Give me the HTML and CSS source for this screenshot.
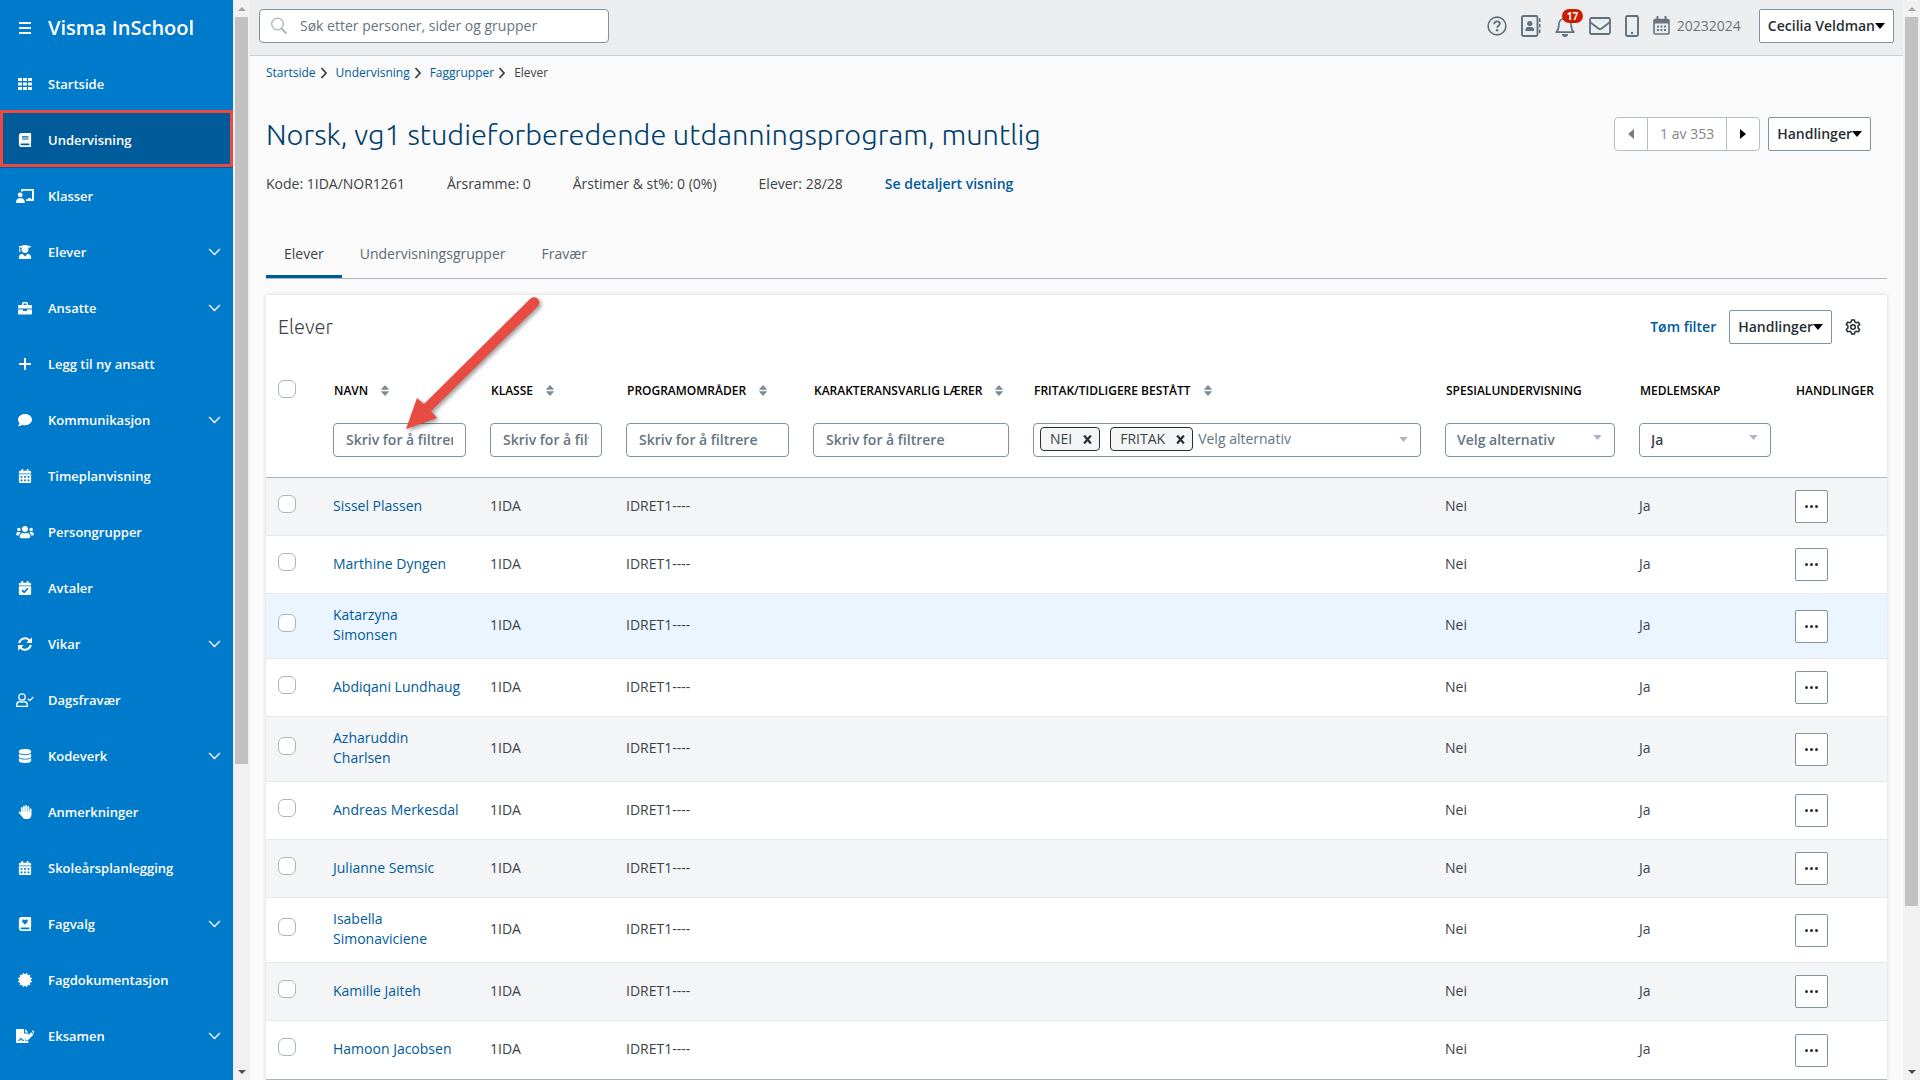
FILE: index.html
```html
<!DOCTYPE html>
<html lang="no">
<head>
  <meta charset="UTF-8">
  <title>Visma InSchool</title>
  <link rel="stylesheet" href="styles.css">
</head>
<body>
  <!-- Icons -->
  <svg class="sprite" aria-hidden="true">
    <symbol id="i-grid" viewBox="0 0 14 14"><path d="M0 1h4v3H0zM5 1h4v3H5zM10 1h4v3h-4zM0 5.500h4v3H0zM5 5.500h4v3H5zM10 5.500h4v3h-4zM0 10h4v3H0zM5 10h4v3H5zM10 10h4v3h-4z"/></symbol>
    <symbol id="i-book" viewBox="0 0 448 512"><path d="M448 360V24c0-13.300-10.700-24-24-24H96C43 0 0 43 0 96v320c0 53 43 96 96 96h328c13.300 0 24-10.700 24-24v-16c0-7.500-3.500-14.300-8.900-18.700-4.200-15.400-4.200-59.300 0-74.700 5.400-4.300 8.900-11.100 8.900-18.600zM112 118h240v50H112zm0 80h240v40H112zm269 250H96c-17.700 0-32-14.300-32-32 0-17.600 14.400-32 32-32h285c-1.900 17-1.900 47 0 64z"/></symbol>
    <symbol id="i-board" viewBox="0 0 18 14"><path d="M6 0h11a1 1 0 0 1 1 1v10a1 1 0 0 1-1 1h-7v-1.700h2V9h3v1.300h1V1.800H7v1A4 4 0 0 0 5 2.300V1a1 1 0 0 1 1-1z"/><circle cx="4.200" cy="5.800" r="2.400"/><path d="M0 14c0-3 1.300-4.700 3.500-4.700h1.800c2.200 0 3.500 1.700 3.500 4.700z"/></symbol>
    <symbol id="i-student" viewBox="0 0 448 512"><path d="M319.400 320.600L224 416l-95.400-95.400C57.100 323.700 0 382.200 0 454.400v9.600c0 26.500 21.500 48 48 48h352c26.500 0 48-21.500 48-48v-9.600c0-72.200-57.100-130.700-128.600-133.800zM13.600 79.800l6.400 1.500v58.400c-7 4.200-12 11.500-12 20.300 0 8.400 4.600 15.400 11.100 19.700L3.500 242c-1.700 6.900 2.100 14 7.600 14h41.800c5.500 0 9.300-7.100 7.600-14l-15.600-62.300C51.400 175.400 56 168.400 56 160c0-8.800-5-16.100-12-20.300V87.100l66 15.900c-8.600 17.200-14 36.400-14 57 0 70.700 57.300 128 128 128s128-57.300 128-128c0-20.600-5.300-39.800-14-57l96.300-23.200c18.200-4.400 18.200-27.100 0-31.500l-190.400-46c-13-3.100-26.700-3.100-39.700 0L13.600 48.200c-18.100 4.400-18.100 27.200 0 31.600z"/></symbol>
    <symbol id="i-case" viewBox="0 0 14 14"><path d="M0 8.500h5V10h4V8.500h5v4a1 1 0 0 1-1 1H1a1 1 0 0 1-1-1zM4 4V2.500A1.500 1.500 0 0 1 5.500 1h3A1.500 1.500 0 0 1 10 2.500V4h3a1 1 0 0 1 1 1v2.500H0V5a1 1 0 0 1 1-1zM5.500 4h3V2.500h-3z"/></symbol>
    <symbol id="i-plus" viewBox="0 0 14 14"><path d="M6 1h2v5h5v2H8v5H6V8H1V6h5z"/></symbol>
    <symbol id="i-comment" viewBox="0 0 512 512"><path d="M256 32C114.600 32 0 125.100 0 240c0 49.600 21.400 95 57 130.700C44.500 421.100 2.700 466 2.200 466.500c-2.200 2.300-2.800 5.700-1.500 8.700S4.800 480 8 480c66.300 0 116-31.800 140.600-51.400 32.700 12.300 69 19.400 107.400 19.400 141.400 0 256-93.100 256-208S397.400 32 256 32z"/></symbol>
    <symbol id="i-cal" viewBox="0 0 448 512"><path fill-rule="evenodd" d="M0 464c0 26.500 21.500 48 48 48h352c26.500 0 48-21.500 48-48V192H0zM400 64h-48V16c0-9-7-16-16-16h-32c-9 0-16 7-16 16v48H160V16c0-9-7-16-16-16h-32c-9 0-16 7-16 16v48H48C21.500 64 0 85.500 0 112v48h448v-48c0-26.500-21.500-48-48-48zM64 256v64h64v-64zm128 0v64h64v-64zm128 0v64h64v-64zM64 384v64h64v-64zm128 0v64h64v-64zm128 0v64h64v-64z"/></symbol>
    <symbol id="i-users" viewBox="0 0 640 512"><path d="M96 224c35.300 0 64-28.700 64-64s-28.700-64-64-64-64 28.700-64 64 28.700 64 64 64zm448 0c35.300 0 64-28.700 64-64s-28.700-64-64-64-64 28.700-64 64 28.700 64 64 64zm32 32h-64c-17.600 0-33.500 7.100-45.100 18.600 40.300 22.100 68.900 62 75.100 109.400h66c17.700 0 32-14.300 32-32v-32c0-35.300-28.700-64-64-64zm-256 0c61.900 0 112-50.100 112-112S381.900 32 320 32 208 82.100 208 144s50.100 112 112 112zm76.800 32h-8.300c-20.800 10-43.900 16-68.500 16s-47.600-6-68.500-16h-8.300C179.600 288 128 339.600 128 403.200V432c0 26.500 21.500 48 48 48h288c26.500 0 48-21.500 48-48v-28.800c0-63.600-51.600-115.200-115.200-115.200zm-223.700-13.400C161.500 263.100 145.600 256 128 256H64c-35.300 0-64 28.700-64 64v32c0 17.700 14.300 32 32 32h65.900c6.300-47.400 34.900-87.300 75.200-109.400z"/></symbol>
    <symbol id="i-calcheck" viewBox="0 0 448 512"><path d="M436 160H12c-6.600 0-12-5.400-12-12v-36c0-26.500 21.500-48 48-48h48V12c0-6.600 5.400-12 12-12h40c6.600 0 12 5.400 12 12v52h128V12c0-6.600 5.400-12 12-12h40c6.600 0 12 5.400 12 12v52h48c26.500 0 48 21.500 48 48v36c0 6.600-5.400 12-12 12zM12 192h424c6.600 0 12 5.400 12 12v260c0 26.500-21.500 48-48 48H48c-26.500 0-48-21.500-48-48V204c0-6.600 5.400-12 12-12zm333.300 96l-28.200-28.400c-4.600-4.800-12.200-4.800-17-.1L194.100 364.700l-46-46.400c-4.600-4.700-12.200-4.700-16.900-.1l-28.400 28.200c-4.700 4.700-4.700 12.300-.1 17l82.600 83.200c4.700 4.700 12.300 4.700 17 .1l143-141.800c4.600-4.700 4.600-12.300 0-17z"/></symbol>
    <symbol id="i-sync" viewBox="0 0 14 14"><path fill="none" stroke="currentColor" stroke-width="2" d="M1.200 6.200A5.900 5.900 0 0 1 11.600 3.500M12.800 7.800A5.900 5.900 0 0 1 2.400 10.500"/><path d="M14 .3V6H8.300zM0 13.700V8h5.700z"/></symbol>
    <symbol id="i-usercheck" viewBox="0 0 18 14"><g fill="none" stroke="currentColor" stroke-width="1.300"><circle cx="6" cy="4" r="3.200"/><path d="M3.500 8.500C1.500 8.800.7 10.300.7 12v1.300h10.600V12c0-1.700-.8-3.200-2.800-3.500-1.500.6-3.500.6-5 0zM11.800 5.800l1.900 1.900L17.400 4"/></g></symbol>
    <symbol id="i-db" viewBox="0 0 448 512"><path d="M448 73v46c0 40-100 73-224 73S0 159 0 119V73C0 33 100 0 224 0s224 33 224 73zM448 176v103c0 40-100 73-224 73S0 319 0 279V176c48 33 136 48.600 224 48.600S400 209 448 176zm0 160v103c0 40-100 73-224 73S0 479 0 439V336c48 33 136 48.600 224 48.600S400 369 448 336z"/></symbol>
    <symbol id="i-hand" viewBox="0 0 14 14"><path d="M2.900 7.700V3a.9.9 0 0 1 1.800 0v3.500h.4V1.400a.9.900 0 0 1 1.800 0v5h.4V.9a.9.900 0 0 1 1.800 0v5.500h.4V2a.9.900 0 0 1 1.800 0v4.800h.4V4.300a.9.900 0 0 1 1.800 0v5c0 3-1.500 4.700-4 4.700H7.800c-1.500 0-2.300-.6-3-1.600L.9 7.900a.9.900 0 0 1 1.300-1.200z"/></symbol>
    <symbol id="i-bookheart" viewBox="0 0 448 512"><path d="M448 358V24c0-13-11-24-24-24H96C43 0 0 43 0 96v320c0 53 43 96 96 96h328c13 0 24-11 24-24v-16c0-8-3-14-9-19-4-15-4-59 0-74 6-5 9-12 9-21zM143 103c24-21 59-15 81 8 22-23 57-29 81-8 28 25 27 65 3 90l-76 79c-5 5-11 5-16 0l-76-79c-24-25-25-65 3-90zm238 345H96c-18 0-32-14-32-32s14-32 32-32h285z"/></symbol>
    <symbol id="i-cert" viewBox="0 0 512 512"><path d="M458.600 256l46-45c13.700-13 7.300-36-10.700-40.400l-62.600-16 17.600-62c5-17.800-11.800-34.600-29.600-29.600l-62 17.600-16-62.600C337.100.2 313.800-6.300 301 7.200l-45 46.400-45-46.400c-12.600-13.300-36-7.200-40.300 10.700l-16 62.700-62-17.700C74.900 57.900 58 74.700 63 92.600l17.700 62-62.600 16C0 174.900-6.300 198 7.400 211l46 45-46 45c-13.700 13-7.300 36 10.700 40.300l62.600 16-17.600 62c-5 17.800 11.800 34.700 29.600 29.700l62-17.700 16 62.700c4.400 18.600 27.700 24 40.300 10.600l45-46 45 46c12.500 13.500 36 7.500 40.300-10.600l16-62.700 62 17.700c17.800 5 34.600-11.900 29.600-29.700l-17.600-62 62.600-16c18-4.300 24.400-27.400 10.700-40.300z"/></symbol>
    <symbol id="i-filepen" viewBox="0 1 18 14"><path fill-rule="evenodd" d="M1 1h7v4.500h4.500v2L9 11v2h3.500v1a1 1 0 0 1-1 1H1a1 1 0 0 1-1-1V2a1 1 0 0 1 1-1zm8 0l3.500 3.500H9zM2 12.800h1.500c.6 0 .8-1 1.300-1.500l1 1.500H8v-1H6.600L5 9.700c-.8.300-1.300 1.300-1.800 2.100H2z"/><path d="M15.300 4.200l2.300 2.300-6 6H9.400v-2.300zM16 3.500l.6-.6c.4-.4.800-.4 1.100-.1l.3.300v2.700z"/></symbol>
    <symbol id="i-down" viewBox="0 0 12 8"><path fill="none" stroke="currentColor" stroke-width="1.300" d="M.6 1L6 6.500 11.400 1"/></symbol>
    <symbol id="i-right" viewBox="0 0 8 12"><path fill="none" stroke="currentColor" stroke-width="1.800" d="M1.500 1L6 6l-4.500 5"/></symbol>
    <symbol id="i-sort" viewBox="0 0 8 11"><path d="M4 0l3.800 4.200v.6H.2v-.6zM4 11L.2 6.800v-.6h7.600v.6z"/></symbol>
    <symbol id="i-caret" viewBox="0 0 10 6"><path d="M0 0h10L5 6z"/></symbol>
  </svg>

  <nav class="sidebar">
    <div class="brand">
      <button class="burger" aria-label="Meny"><span></span><span></span><span></span></button>
      <span>Visma InSchool</span>
    </div>
    <a href="#"><svg><use href="#i-grid"/></svg>Startside</a>
    <a href="#" class="active"><svg><use href="#i-book"/></svg>Undervisning</a>
    <a href="#"><svg><use href="#i-board"/></svg>Klasser</a>
    <a href="#"><svg><use href="#i-student"/></svg>Elever<svg class="chev"><use href="#i-down"/></svg></a>
    <a href="#"><svg><use href="#i-case"/></svg>Ansatte<svg class="chev"><use href="#i-down"/></svg></a>
    <a href="#"><svg><use href="#i-plus"/></svg>Legg til ny ansatt</a>
    <a href="#"><svg><use href="#i-comment"/></svg>Kommunikasjon<svg class="chev"><use href="#i-down"/></svg></a>
    <a href="#"><svg><use href="#i-cal"/></svg>Timeplanvisning</a>
    <a href="#"><svg><use href="#i-users"/></svg>Persongrupper</a>
    <a href="#"><svg><use href="#i-calcheck"/></svg>Avtaler</a>
    <a href="#"><svg><use href="#i-sync"/></svg>Vikar<svg class="chev"><use href="#i-down"/></svg></a>
    <a href="#"><svg><use href="#i-usercheck"/></svg>Dagsfravær</a>
    <a href="#"><svg><use href="#i-db"/></svg>Kodeverk<svg class="chev"><use href="#i-down"/></svg></a>
    <a href="#"><svg><use href="#i-hand"/></svg>Anmerkninger</a>
    <a href="#"><svg><use href="#i-cal"/></svg>Skoleårsplanlegging</a>
    <a href="#"><svg><use href="#i-bookheart"/></svg>Fagvalg<svg class="chev"><use href="#i-down"/></svg></a>
    <a href="#"><svg><use href="#i-cert"/></svg>Fagdokumentasjon</a>
    <a href="#"><svg><use href="#i-filepen"/></svg>Eksamen<svg class="chev"><use href="#i-down"/></svg></a>
  </nav>

  <div class="scrollbar side" aria-hidden="true"><i class="up"></i><div class="track"><b></b></div><i class="down"></i></div>

  <div class="page">
    <header class="topbar">
      <label class="search">
        <svg viewBox="0 0 16 18"><g fill="none" stroke="currentColor"><circle cx="6.500" cy="7" r="5.800" stroke-width="1.300"/><path d="M10.500 11.500l5 5" stroke-width="1.800"/></g></svg>
        <input type="text" placeholder="Søk etter personer, sider og grupper" aria-label="Søk">
      </label>
      <div class="tools">
        <button class="tool" aria-label="Hjelp"><svg viewBox="0 0 20 20" width="20" height="20"><g fill="none" stroke="currentColor"><circle cx="10" cy="10" r="8.900" stroke-width="1.600"/><path d="M7.200 8.200c0-1.800 1.200-2.800 2.800-2.800s2.800 1 2.800 2.400c0 1.900-2.700 1.900-2.700 4" stroke-width="1.900"/></g><circle cx="10.100" cy="14.200" r="1.200" fill="currentColor"/></svg></button>
        <button class="tool" aria-label="Kontakter"><svg viewBox="0 0 20 22" width="20" height="22"><rect x="1" y="1" width="15.500" height="20" rx="1.500" fill="none" stroke="currentColor" stroke-width="1.900"/><path fill="currentColor" d="M18 3.500h1.500V7H18zM18 9h1.500v3.500H18zM18 14.500h1.500V18H18zM4.500 16v-1.500c0-1.600 1-2.500 2.500-2.500h3.500c1.500 0 2.500.9 2.500 2.500V16z"/><circle cx="8.800" cy="8.500" r="2.600" fill="currentColor"/></svg></button>
        <button class="tool bell" aria-label="Varsler"><svg viewBox="0 0 20 22" width="20" height="22"><path fill="none" stroke="currentColor" stroke-width="1.700" stroke-linejoin="round" d="M1.200 17.200c1.800-1.700 2.600-3.200 2.600-7.200 0-4 2.500-6.500 6.200-6.500s6.200 2.500 6.200 6.500c0 4 .8 5.500 2.600 7.200z"/><path fill="currentColor" d="M9 1h2v2H9zM7 19h6a3 3 0 0 1-6 0z"/></svg><span class="badge">17</span></button>
        <button class="tool" aria-label="Meldinger"><svg viewBox="0 0 22 18" width="22" height="18"><g fill="none" stroke="currentColor" stroke-width="1.800"><rect x="1" y="1" width="20" height="16" rx="1.500"/><path d="M1 5l8 6.200c1.300 1 2.700 1 4 0L21 5"/></g></svg></button>
        <button class="tool" aria-label="Mobil"><svg viewBox="0 0 14 22" width="14" height="22"><rect x="1" y="1" width="12" height="20" rx="1.500" fill="none" stroke="currentColor" stroke-width="1.900"/><circle cx="7" cy="18" r="1.200" fill="currentColor"/></svg></button>
        <a href="#" class="year"><svg viewBox="0 0 17 19" width="17" height="19"><rect x="1" y="3.500" width="15" height="14.500" rx="1.200" fill="none" stroke="currentColor" stroke-width="1.600"/><path fill="currentColor" d="M3.500 0h2v4h-2zM11.500 0h2v4h-2zM1 3.500h15v4H1zM4 9.500h2v2H4zM7.500 9.500h2v2h-2zM11 9.500h2v2h-2zM4 13h2v2H4zM7.500 13h2v2h-2zM11 13h2v2h-2z"/></svg>20232024</a>
        <button class="btn user">Cecilia Veldman<svg class="caret"><use href="#i-caret"/></svg></button>
      </div>
    </header>

    <main>
      <div class="breadcrumb">
        <a href="#">Startside</a><svg><use href="#i-right"/></svg>
        <a href="#">Undervisning</a><svg><use href="#i-right"/></svg>
        <a href="#">Faggrupper</a><svg><use href="#i-right"/></svg>
        <span>Elever</span>
      </div>

      <div class="title-row">
        <h1>Norsk, vg1 studieforberedende utdanningsprogram, muntlig</h1>
        <div class="pager">
          <button disabled aria-label="Forrige"><svg viewBox="0 0 6 10"><path d="M6 0v10L0 5z"/></svg></button>
          <span>1 av 353</span>
          <button aria-label="Neste"><svg viewBox="0 0 6 10"><path d="M0 0v10l6-5z"/></svg></button>
        </div>
        <button class="btn">Handlinger<svg class="caret"><use href="#i-caret"/></svg></button>
      </div>

      <div class="meta">
        <span>Kode: 1IDA/NOR1261</span>
        <span>Årsramme: 0</span>
        <span>Årstimer &amp; st%: 0 (0%)</span>
        <span>Elever: 28/28</span>
        <a href="#">Se detaljert visning</a>
      </div>

      <div class="tabs">
        <a href="#" class="current">Elever</a>
        <a href="#">Undervisningsgrupper</a>
        <a href="#">Fravær</a>
      </div>

      <section class="card">
        <div class="card-head">
          <h2>Elever</h2>
          <a href="#">Tøm filter</a>
          <button class="btn">Handlinger<svg class="caret"><use href="#i-caret"/></svg></button>
          <button class="gear" aria-label="Innstillinger"><svg viewBox="0 0 16 16" width="16" height="16"><g fill="none" stroke="currentColor" stroke-width="1.500" stroke-linejoin="round"><path d="M6.600.9h2.800l.4 2 1.500.9 2-.7 1.400 2.400-1.600 1.400v2.200l1.600 1.400-1.400 2.400-2-.7-1.500.9-.4 2H6.600l-.4-2-1.500-.9-2 .7-1.400-2.400 1.600-1.400V6.900L1.300 5.500l1.400-2.400 2 .7 1.500-.9z"/><circle cx="8" cy="8" r="2.300"/></g></svg></button>
        </div>

        <table>
          <colgroup>
            <col class="c-check"><col class="c-name"><col class="c-class"><col class="c-prog"><col class="c-teacher"><col><col class="c-spec"><col class="c-member"><col class="c-act">
          </colgroup>
          <thead>
            <tr class="labels">
              <th><input type="checkbox" aria-label="Velg alle"></th>
              <th>NAVN<svg class="sort"><use href="#i-sort"/></svg></th>
              <th>KLASSE<svg class="sort"><use href="#i-sort"/></svg></th>
              <th>PROGRAMOMRÅDER<svg class="sort"><use href="#i-sort"/></svg></th>
              <th>KARAKTERANSVARLIG LÆRER<svg class="sort"><use href="#i-sort"/></svg></th>
              <th>FRITAK/TIDLIGERE BESTÅTT<svg class="sort"><use href="#i-sort"/></svg></th>
              <th>SPESIALUNDERVISNING</th>
              <th>MEDLEMSKAP</th>
              <th>HANDLINGER</th>
            </tr>
            <tr class="filters">
              <td></td>
              <td><input class="field" type="text" placeholder="Skriv for å filtrere" aria-label="Navn"></td>
              <td><input class="field" type="text" placeholder="Skriv for å filtrere" aria-label="Klasse"></td>
              <td><input class="field" type="text" placeholder="Skriv for å filtrere" aria-label="Programområder"></td>
              <td><input class="field" type="text" placeholder="Skriv for å filtrere" aria-label="Karakteransvarlig lærer"></td>
              <td>
                <div class="field multi">
                  <span class="tag">NEI <button aria-label="Fjern Nei"><svg viewBox="0 0 8 8"><path d="M1 .5l6 7M7 .5l-6 7"/></svg></button></span>
                  <span class="tag">FRITAK <button aria-label="Fjern Fritak"><svg viewBox="0 0 8 8"><path d="M1 .5l6 7M7 .5l-6 7"/></svg></button></span>
                  <input type="text" placeholder="Velg alternativ" aria-label="Fritak/tidligere bestått">
                  <svg class="arrow"><use href="#i-caret"/></svg>
                </div>
              </td>
              <td>
                <div class="pick">
                  <select class="field empty" aria-label="Spesialundervisning"><option>Velg alternativ</option></select>
                  <svg class="arrow"><use href="#i-caret"/></svg>
                </div>
              </td>
              <td>
                <div class="pick">
                  <select class="field" aria-label="Medlemskap"><option>Ja</option></select>
                  <svg class="arrow"><use href="#i-caret"/></svg>
                </div>
              </td>
              <td></td>
            </tr>
          </thead>
          <tbody>
            <tr>
              <td><input type="checkbox" aria-label="Sissel Plassen"></td>
              <td><a href="#">Sissel Plassen</a></td><td>1IDA</td><td>IDRET1----</td><td></td><td></td><td>Nei</td><td>Ja</td>
              <td><button class="more" aria-label="Handlinger"><i></i><i></i><i></i></button></td>
            </tr>
            <tr>
              <td><input type="checkbox" aria-label="Marthine Dyngen"></td>
              <td><a href="#">Marthine Dyngen</a></td><td>1IDA</td><td>IDRET1----</td><td></td><td></td><td>Nei</td><td>Ja</td>
              <td><button class="more" aria-label="Handlinger"><i></i><i></i><i></i></button></td>
            </tr>
            <tr class="hover">
              <td><input type="checkbox" aria-label="Katarzyna Simonsen"></td>
              <td><a href="#">Katarzyna Simonsen</a></td><td>1IDA</td><td>IDRET1----</td><td></td><td></td><td>Nei</td><td>Ja</td>
              <td><button class="more" aria-label="Handlinger"><i></i><i></i><i></i></button></td>
            </tr>
            <tr>
              <td><input type="checkbox" aria-label="Abdiqani Lundhaug"></td>
              <td><a href="#">Abdiqani Lundhaug</a></td><td>1IDA</td><td>IDRET1----</td><td></td><td></td><td>Nei</td><td>Ja</td>
              <td><button class="more" aria-label="Handlinger"><i></i><i></i><i></i></button></td>
            </tr>
            <tr>
              <td><input type="checkbox" aria-label="Azharuddin Charlsen"></td>
              <td><a href="#">Azharuddin Charlsen</a></td><td>1IDA</td><td>IDRET1----</td><td></td><td></td><td>Nei</td><td>Ja</td>
              <td><button class="more" aria-label="Handlinger"><i></i><i></i><i></i></button></td>
            </tr>
            <tr>
              <td><input type="checkbox" aria-label="Andreas Merkesdal"></td>
              <td><a href="#">Andreas Merkesdal</a></td><td>1IDA</td><td>IDRET1----</td><td></td><td></td><td>Nei</td><td>Ja</td>
              <td><button class="more" aria-label="Handlinger"><i></i><i></i><i></i></button></td>
            </tr>
            <tr>
              <td><input type="checkbox" aria-label="Julianne Semsic"></td>
              <td><a href="#">Julianne Semsic</a></td><td>1IDA</td><td>IDRET1----</td><td></td><td></td><td>Nei</td><td>Ja</td>
              <td><button class="more" aria-label="Handlinger"><i></i><i></i><i></i></button></td>
            </tr>
            <tr>
              <td><input type="checkbox" aria-label="Isabella Simonaviciene"></td>
              <td><a href="#">Isabella Simonaviciene</a></td><td>1IDA</td><td>IDRET1----</td><td></td><td></td><td>Nei</td><td>Ja</td>
              <td><button class="more" aria-label="Handlinger"><i></i><i></i><i></i></button></td>
            </tr>
            <tr>
              <td><input type="checkbox" aria-label="Kamille Jaiteh"></td>
              <td><a href="#">Kamille Jaiteh</a></td><td>1IDA</td><td>IDRET1----</td><td></td><td></td><td>Nei</td><td>Ja</td>
              <td><button class="more" aria-label="Handlinger"><i></i><i></i><i></i></button></td>
            </tr>
            <tr>
              <td><input type="checkbox" aria-label="Hamoon Jacobsen"></td>
              <td><a href="#">Hamoon Jacobsen</a></td><td>1IDA</td><td>IDRET1----</td><td></td><td></td><td>Nei</td><td>Ja</td>
              <td><button class="more" aria-label="Handlinger"><i></i><i></i><i></i></button></td>
            </tr>
          </tbody>
        </table>

        <!-- Arrow pointing at the name filter -->
        <svg class="pointer" viewBox="0 0 140 140" aria-hidden="true"><path fill="#e84b42" d="M4 134L15 103l7 6L128 4a5.200 5.200 0 0 1 8 7L29 116l6 7z"/></svg>
      </section>
    </main>
  </div>

  <div class="scrollbar main" aria-hidden="true"><i class="up"></i><div class="track"><b></b></div><i class="down"></i></div>
</body>
</html>
```
FILE: styles.css
```css
* {
  box-sizing: border-box;
}

body {
  margin: 0;
  height: 100vh;
  overflow: hidden;
  display: grid;
  grid-template-columns: 233px 17px 1fr 17px;
  font-family: "Open Sans", sans-serif;
  font-size: 14px;
  line-height: 20px;
  color: #3c4348;
  background: #fafafa;
}

a {
  color: #005b9a;
  text-decoration: none;
}

button, input, select {
  font: inherit;
  color: inherit;
}

button {
  padding: 0;
  border: none;
  background: none;
  cursor: pointer;
}

.sprite {
  position: absolute;
  width: 0;
  height: 0;
}

/* Sidebar */
.sidebar {
  height: 100vh;
  overflow: hidden;
  background: #007aca;
  color: #fff;
}

.brand {
  display: flex;
  align-items: center;
  gap: 17px;
  height: 56px;
  padding-left: 19px;
  font-size: 20px;
  font-weight: 600;
}

.burger {
  display: flex;
  flex-direction: column;
  gap: 3px;
  width: 12px;
}

.burger span {
  height: 2px;
  background: #fff;
}

.sidebar a {
  position: relative;
  display: flex;
  align-items: center;
  height: 56px;
  padding: 0 12px 0 16px;
  color: #fff;
  font-size: 13px;
  font-weight: 600;
}

.sidebar svg {
  width: 18px;
  height: 14px;
  margin-right: 14px;
  fill: currentColor;
}

.sidebar .chev {
  width: 13px;
  height: 8px;
  margin: 0 0 0 auto;
}

.sidebar .active {
  background: #005b9a;
}

.sidebar .active::after {
  content: "";
  position: absolute;
  inset: -2px 0 1px;
  border: 3px solid #ea4a42;
}

/* Scrollbars */
.scrollbar {
  display: flex;
  flex-direction: column;
  align-items: center;
  height: 100vh;
  background: #f1f1f1;
}

.scrollbar i {
  display: flex;
  align-items: center;
  justify-content: center;
  height: 17px;
}

.scrollbar i::before {
  content: "";
  border: 4px solid transparent;
}

.scrollbar .up::before {
  border-top: 0;
  border-bottom-color: #a3a3a3;
}

.scrollbar .down::before {
  border-bottom: 0;
  border-top-color: #505050;
}

.scrollbar .track {
  flex: 1;
  width: 13px;
}

.scrollbar b {
  display: block;
  background: #c1c1c1;
}

.scrollbar.side b {
  height: 71.4%;
}

.scrollbar.main b {
  height: 85%;
}

/* Top bar */
.page {
  min-width: 0;
  height: 100vh;
  overflow: hidden;
}

.topbar {
  display: flex;
  align-items: center;
  justify-content: space-between;
  height: 56px;
  padding: 0 9px 4px;
  background: #ecedef;
  border-bottom: 1px solid #cdd0d3;
}

.search {
  display: flex;
  align-items: center;
  gap: 13px;
  width: 350px;
  height: 34px;
  padding: 0 11px;
  border: 1px solid #8392a0;
  border-radius: 4px;
  background: #fff;
}

.search svg {
  width: 16px;
  height: 18px;
  color: #a9b3bb;
}

.search input {
  flex: 1;
  padding: 0;
  border: none;
  outline: none;
}

::placeholder {
  color: #64757f;
  opacity: 1;
}

.tools {
  display: flex;
  align-items: center;
  gap: 14px;
  color: #5f717d;
}

.tool {
  position: relative;
  display: flex;
}

.badge {
  position: absolute;
  top: -6px;
  left: 7px;
  height: 14px;
  padding: 0 5px;
  border-radius: 7px;
  background: #ca1c00;
  color: #fff;
  font-size: 10px;
  font-weight: 700;
  line-height: 14px;
}

.year {
  display: flex;
  align-items: center;
  gap: 7px;
  color: #66757f;
}

.btn {
  display: flex;
  align-items: center;
  height: 34px;
  padding: 0 8px;
  border: 1px solid #8392a0;
  border-radius: 2px;
  background: #fff;
  color: #252f35;
  font-weight: 600;
}

.caret {
  width: 10px;
  height: 6px;
}

.user {
  margin-left: 4px;
}

/* Page heading */
main {
  padding: 7px 16px 0;
}

.breadcrumb {
  display: flex;
  align-items: center;
  gap: 4px;
  font-size: 12px;
}

.breadcrumb svg {
  width: 8px;
  height: 12px;
  margin-right: 4px;
}

.title-row {
  display: flex;
  align-items: center;
  gap: 8px;
  padding: 31px 16px 0 0;
}

h1, h2 {
  flex: 1;
  margin: 0;
  font-family: Ubuntu, "Open Sans", sans-serif;
  font-weight: 300;
}

h1 {
  color: #003e6b;
  font-size: 29px;
  line-height: 40px;
}

.pager {
  display: flex;
  height: 34px;
  border: 1px solid #b4bec6;
  border-radius: 4px;
  background: #fff;
}

.pager button {
  width: 32px;
}

.pager button svg {
  width: 6px;
  height: 10px;
}

.pager button:disabled {
  color: #7c7c7c;
  fill: #7c7c7c;
}

.pager span {
  padding: 6px 12px;
  border: 1px solid #b4bec6;
  border-width: 0 1px;
  color: #858585;
}

.meta {
  display: flex;
  gap: 42px;
  margin-top: 20px;
}

.meta a, .card-head a {
  font-weight: 600;
}

.tabs {
  display: flex;
  margin-top: 40px;
  border-bottom: 1px solid #a9b5c0;
}

.tabs a {
  padding: 10px 18px 11px;
  border-bottom: 3px solid transparent;
  color: #5d6a73;
}

.tabs .current {
  border-color: #005b9a;
  color: #3c4348;
}

/* Student list */
.card {
  position: relative;
  margin-top: 16px;
  background: #fff;
  box-shadow: 0 0 4px rgba(0,0,0,0.15);
}

.card-head {
  display: flex;
  align-items: center;
  gap: 13px;
  padding: 15px 24px 25px 12px;
}

h2 {
  font-size: 20px;
}

.gear {
  display: flex;
  width: 18px;
  color: #252f35;
}

table {
  width: 100%;
  table-layout: fixed;
  border-collapse: separate;
  border-spacing: 0;
  border-bottom: 1px solid #a9b5c0;
}

.c-check { width: 55px; }
.c-name { width: 157px; }
.c-class { width: 136px; }
.c-prog { width: 187px; }
.c-teacher { width: 220px; }
.c-spec { width: 194px; }
.c-member { width: 156px; }
.c-act { width: 104px; }

th {
  padding: 12px 0 10px 13px;
  color: #000;
  font-size: 12px;
  font-weight: 600;
  text-align: left;
  white-space: nowrap;
}

th:first-child {
  padding: 10px 0 12px 12px;
}

.sort {
  width: 8px;
  height: 11px;
  margin-left: 13px;
  vertical-align: -1px;
  fill: #7c8b98;
}

td {
  padding: 11px 12px 13px;
  height: 58px;
  border-bottom: 1px solid #e6e9ec;
}

td:last-child {
  padding: 12px;
}

tbody a {
  display: block;
  margin-right: 4px;
}

.filters td {
  padding: 12px 12px 20px;
  border-bottom-color: #a9b5c0;
}

tbody tr:nth-child(odd) {
  background: #f3f5f7;
}

tbody tr.hover {
  background: #ebf5ff;
}

tbody tr:last-child td {
  border-bottom: none;
}

input[type="checkbox"] {
  display: block;
  appearance: none;
  width: 18px;
  height: 18px;
  margin: 0;
  border: 1px solid #a9b5c0;
  border-radius: 6px;
  background: #fff;
}

td input[type="checkbox"] {
  margin-bottom: 4px;
}

.field {
  display: block;
  width: 100%;
  height: 34px;
  padding: 0 12px 2px;
  border: 1px solid #8392a0;
  border-radius: 4px;
  background: #fff;
  font-weight: 600;
}

.pick {
  position: relative;
}

select.field {
  appearance: none;
  padding: 0 11px;
}

.empty {
  color: #64757f;
}

.arrow {
  width: 9px;
  height: 5px;
  fill: #a9b5c0;
}

.pick .arrow {
  position: absolute;
  top: 12px;
  right: 13px;
}

.multi {
  display: flex;
  align-items: center;
  gap: 5px;
  padding: 0 12px 2px 6px;
  font-weight: 400;
}

.multi input {
  flex: 1;
  min-width: 0;
  padding: 0;
  border: none;
}

.tag {
  display: flex;
  align-items: center;
  gap: 11px;
  height: 24px;
  padding: 0 7px 0 9px;
  margin-right: 5px;
  border: 1px solid #252f35;
  border-radius: 4px;
  background: #f3f5f7;
  font-weight: 500;
}

.tag + .tag {
  margin-right: 0;
}

.tag svg {
  display: block;
  width: 9px;
  height: 9px;
  stroke: #252f35;
  stroke-width: 2;
}

.more {
  display: flex;
  align-items: center;
  justify-content: center;
  gap: 2px;
  width: 33px;
  height: 33px;
  border: 1px solid #8392a0;
  border-radius: 2px;
  background: #fff;
}

.more i {
  width: 3px;
  height: 3px;
  border-radius: 50%;
  background: #252f35;
}

.pointer {
  position: absolute;
  top: 0;
  left: 136px;
  width: 140px;
  height: 140px;
  filter: drop-shadow(2px 2px 2px rgba(0,0,0,0.4));
}
```
